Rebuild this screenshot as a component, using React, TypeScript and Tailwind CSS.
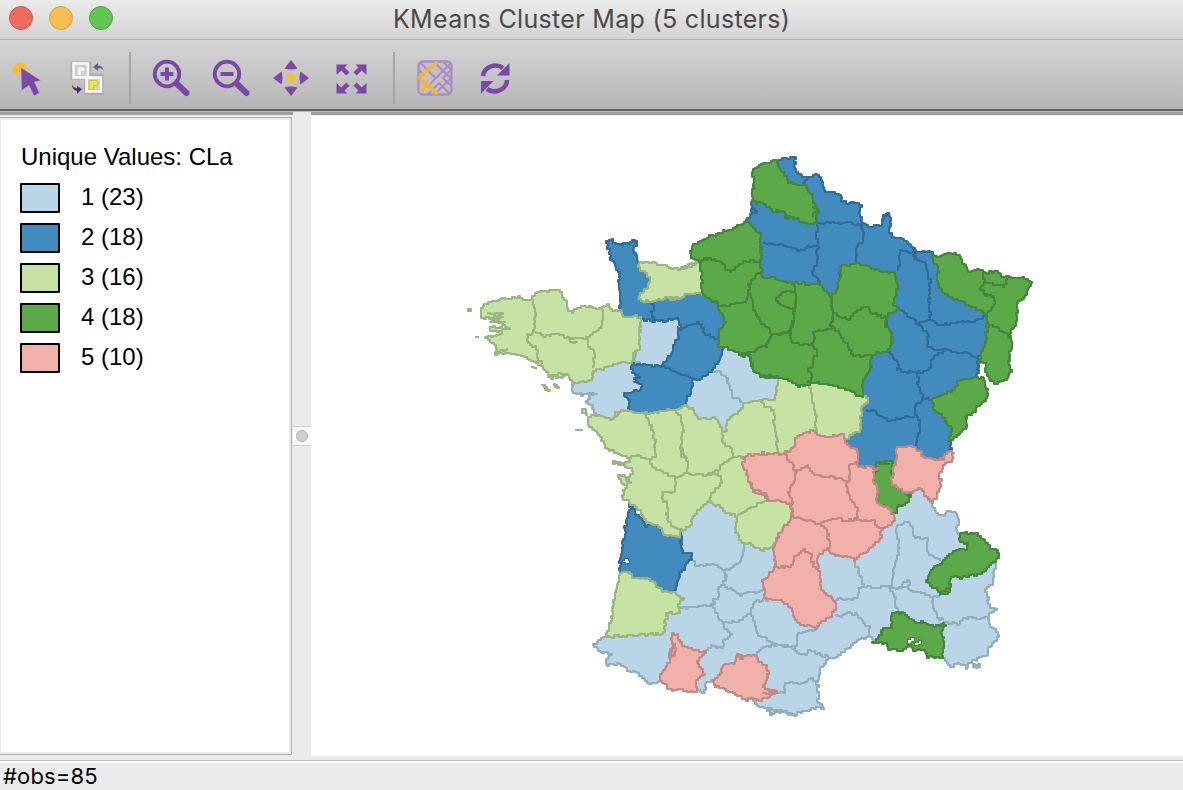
import React from "react";

type Pt = [number, number];

// Boundary tables are digitised sheet by sheet at three units per map pixel.
const SHEETS: Record<string, Pt> = {
  A: [460, 230],
  B: [670, 140],
  C: [840, 190],
  D: [560, 330],
  E: [740, 320],
  F: [580, 490],
  G: [740, 480],
};

function parse(src: string): Pt[] {
  let origin: Pt = [0, 0];
  const out: Pt[] = [];
  for (const tok of src.trim().split(/\s+/)) {
    if (SHEETS[tok]) {
      origin = SHEETS[tok];
    } else {
      const [x, y] = tok.split(",").map(Number);
      out.push([origin[0] + x / 3, origin[1] + y / 3]);
    }
  }
  return out;
}

function noise(x: number, y: number) {
  const s = Math.sin(x * 12.9898 + y * 78.233) * 43758.5453;
  return (s - Math.floor(s)) * 2 - 1;
}

// Turns a coarse boundary into a stepped, pixel-aligned one.
function trace(src: string, closed: boolean, wobble = 1.35): string {
  const pts = parse(src);
  if (closed) pts.push(pts[0]);
  const r = Math.round;
  let d = `M${r(pts[0][0])} ${r(pts[0][1])}`;
  for (let i = 1; i < pts.length; i++) {
    const [x0, y0] = pts[i - 1];
    const [x1, y1] = pts[i];
    const len = Math.hypot(x1 - x0, y1 - y0) || 1;
    const n = Math.max(1, r(len / 2.5));
    for (let k = 1; k <= n; k++) {
      const t = k / n;
      let x = x0 + (x1 - x0) * t;
      let y = y0 + (y1 - y0) * t;
      if (k < n) {
        const j = noise(r(x), r(y)) * wobble;
        x += (-(y1 - y0) / len) * j;
        y += ((x1 - x0) / len) * j;
      }
      d += `H${r(x)}V${r(y)}`;
    }
  }
  return closed ? d + "Z" : d;
}

interface Cluster {
  label: string;
  fill: string;
  stroke: string;
  areas: string[];
  lines: string[];
}

const CLUSTERS: Cluster[] = [
  {
    label: "1 (23)",
    fill: "#bad5e7",
    stroke: "#93adbc",
    areas: [
      "A 530,265 670,262 670,290 620,415 515,415 525,375",
      "A 400,418 350,458 335,464 338,490 356,488 362,497 385,489 410,491 388,500 390,507 378,518 398,530 403,550 430,568 450,580 520,555 520,510 520,490 560,470 540,395 490,390",
      "D 485,40 500,50 555,70 590,90 610,130 665,135 660,220 580,225 550,240 510,285 490,315 470,280 410,277 365,235 370,215 390,150 420,140 455,120 475,90",
      "F 75,440 55,455 38,465 60,485 80,485 95,495 78,515 80,528 110,520 150,545 178,550 185,565 208,582 238,572 300,590 345,598 360,605 375,608 378,575 400,572 450,595 500,615 527,635 530,648 560,655 570,672 600,660 645,675 G 80,685 90,705 110,695 130,693 162,708 185,692 235,682 252,685 245,672 233,665 233,600 240,570 265,535 300,525 345,485 385,468 400,480 450,480 600,525 620,548 630,560 650,550 672,555 680,568 685,548 740,525 745,500 770,480 773,455 755,440 745,410 755,395 772,388 750,380 740,345 740,320 755,315 760,275 768,250 740,220 690,180 665,165 650,150 655,110 640,95 620,95 615,108 600,105 585,85 575,66 550,25 510,35 480,80 455,110 430,140 380,180 300,190 150,200 F 590,165 545,165 515,145 485,125 488,65 440,45 400,25 385,20 330,80 285,130 290,200 280,300 250,400 240,425",
      "G 700,560 715,562 720,553 706,551",
    ],
    lines: [
      "D 455,127 480,127 497,145 507,165 517,205 530,205 543,220",
      "F 340,212 345,228 385,225 410,225 425,240 445,240 475,220 490,190 492,162",
      "F 425,240 440,260 430,285 415,290 418,320 400,335 400,348",
      "F 430,285 455,300 480,318 500,305 525,310 550,295",
      "F 303,355 330,350 370,345 400,345 405,370 425,395 470,395 510,370 522,335 565,328",
      "F 425,395 440,420 455,435 435,450 430,475 395,465 385,480 370,487",
      "F 510,370 525,400 530,430 570,455 590,465 620,470 650,465",
      "F 530,500 530,485 550,470 590,468",
      "G 115,495 165,505 170,480 175,460 190,455 215,452 235,440",
      "G 165,505 170,520 195,525 205,510 240,525 265,535",
      "G 285,405 300,410 325,395 350,405 370,430 390,445 388,470",
      "G 345,245 355,280 365,305 372,320 355,325 355,355 280,360",
      "G 372,320 400,325 430,318 450,325 462,350 465,370 475,395",
      "G 450,325 460,290 468,240 478,200 472,160 470,135",
      "G 470,135 500,125 520,150 525,175 560,175 563,220 600,243",
      "G 450,325 475,325 485,320 490,305 500,300 510,315 495,322 478,318",
      "G 500,325 520,335 550,340 575,355 580,385 590,415 610,420",
      "G 575,352 598,345",
      "G 610,425 650,435 670,415 700,415 740,412",
      "G 115,640 135,635 135,610 190,610 205,597 235,603",
    ],
  },
  {
    label: "2 (18)",
    fill: "#428bbe",
    stroke: "#2f6d99",
    areas: [
      "A 438,32 455,27 460,38 485,44 510,35 530,32 530,48 520,62 528,75 535,100 600,130 600,190 700,180 B 95,440 160,480 185,540 160,595 D 490,45 480,90 455,125 420,150 400,150 395,175 378,220 370,250 300,257 215,257 205,230 210,210 200,200 192,190 215,185 240,180 245,162 222,155 240,140 225,130 215,125 215,100 240,105 300,110 320,85 335,65 345,40 355,10 A 655,300 662,285 655,265 640,270 585,275 545,268 520,262 488,262 480,235 483,215 480,180 475,150 480,125 455,90 447,65 445,40",
      "B 318,65 335,55 375,50 378,95 395,112 410,115 435,103 452,112 458,135 465,155 490,155 508,165 512,185 560,190 575,200 570,230 575,250 600,262 635,255 638,230 655,220 C 125,100 130,75 145,70 150,85 148,130 155,140 200,155 220,175 228,185 270,185 280,197 315,240 325,280 350,310 450,350 455,400 445,470 415,505 412,555 E 690,190 640,230 615,260 640,330 635,360 635,390 605,430 570,430 500,410 480,400 475,435 400,453 340,450 340,400 310,375 310,340 355,330 350,270 350,225 375,110 450,70 440,0 B 640,560 600,400 510,395 510,460 487,490 450,445 350,438 265,420 255,290 225,250 245,215 247,180 300,175 420,230 410,190 390,160 320,130",
      "F 152,42 145,75 138,100 130,170 122,205 120,248 130,265 200,285 250,320 280,308 290,280 297,245 315,240 318,220 335,205 335,190 305,188 303,130 270,125 215,100 200,110 185,85 165,65 160,45",
    ],
    lines: [
      "A 570,222 582,235 575,255 580,275",
      "B 20,560 30,570 45,560 80,545 95,555 100,580 140,598",
      "D 310,108 350,130 390,145 400,150",
      "D 222,132 238,142 222,150",
      "B 280,310 320,315 350,320 380,333 410,318 440,318",
      "B 445,250 437,290 443,320 440,370 425,400 440,415 450,430",
      "B 430,250 445,250 500,250 540,247 575,260 580,300 560,325 558,365",
      "B 246,200 262,220 246,222",
      "B 395,130 410,115",
      "C 170,240 180,215 180,180 215,185 230,210 255,215 265,250 272,280 268,320 270,390",
      "C 215,170 225,190 228,205",
      "C 172,355 210,385 235,400 270,390 290,405 330,400 380,393 400,395 435,375",
      "C 225,402 245,415 265,435 262,470 290,480 320,480 350,490 380,490 415,505",
      "C 320,480 275,510 268,540 235,550 200,545 175,540 170,510 145,480",
      "E 535,165 535,200 550,235 525,265 525,285 540,305 540,340 530,365 530,390",
      "E 525,290 445,300 400,270 380,268",
      "E 545,235 575,235",
    ],
  },
  {
    label: "3 (16)",
    fill: "#c6e2a4",
    stroke: "#9bb480",
    areas: [
      "A 64,235 72,222 90,215 120,208 165,203 175,198 190,210 215,205 225,188 240,184 275,180 300,185 305,205 318,212 322,235 337,250 350,235 370,228 400,235 425,232 440,222 450,238 480,240 488,262 510,262 520,257 540,262 540,360 520,375 515,400 490,397 460,408 400,422 395,450 350,458 320,432 310,444 265,442 265,425 235,400 200,380 175,375 150,368 110,374 107,345 75,322 100,318 125,312 125,304 90,302 90,292 150,293 125,285 130,278 90,275 130,262 64,264",
      "A 538,95 560,95 600,105 655,120 690,110 715,95 B 30,388 60,372 85,362 110,400 105,465 80,458 45,465 30,478 0,475 A 660,205 620,200 580,215 535,208 540,190 560,175 570,150 560,130 540,120",
      "D 85,260 100,255 120,258 150,270 162,262 165,245 175,258 182,240 205,242 215,245 240,250 290,250 320,238 360,235 375,225 400,240 415,268 460,262 475,275 487,305 500,300 500,270 540,240 550,220 575,212 610,208 640,210 650,180 655,145 E 115,170 240,180 355,210 370,220 385,250 365,265 360,335 330,348 300,370 180,370 140,420 110,450 110,540 165,540 F 645,45 650,85 615,115 595,145 580,172 545,180 520,165 495,160 465,125 470,80 450,70 430,55 400,38 385,35 335,90 330,110 300,125 300,140 260,135 240,110 205,97 190,75 165,45 150,38 130,22 D 190,480 200,465 185,455 175,435 190,435 200,458 212,460 205,440 220,430 215,415 195,405 158,400 158,393 180,400 210,392 200,378 140,355 120,315 95,290 85,275",
      "F 120,248 150,245 155,265 205,268 245,305 285,308 312,330 295,350 300,370 262,370 250,432 150,435 125,440 80,438 95,385 100,330 110,290",
      "A 24,237 34,237 34,243 26,242",
      "A 247,465 255,480 270,480 262,472",
      "A 282,463 290,472 298,475 292,466",
      "D 65,238 78,242 80,255 70,248",
    ],
    lines: [
      "A 46,321 56,321",
      "A 214,412 230,413",
      "D 46,299 66,302",
      "A 82,250 128,252 118,262 90,268 135,280",
      "A 215,210 225,250 222,300 215,315 200,315 205,340 235,360 230,385 245,402",
      "A 222,305 250,320 290,312 335,328 360,325 385,320 400,305 425,295 430,255 425,235",
      "A 320,322 338,340 352,334",
      "A 385,320 385,350 400,360 405,385 398,415",
      "A 270,434 318,430",
      "A 115,365 140,355",
      "D 250,252 258,265 275,290 283,330 287,380 270,390",
      "D 200,385 230,375 265,388 275,410 310,428 345,445",
      "D 345,240 362,260 370,300 362,350 375,385 385,405 380,430 345,450 345,485 305,490 308,515 320,520 320,570 340,590 365,600",
      "D 362,350 364,380 385,385",
      "D 380,430 430,438 475,430 480,405 520,380 550,380",
      "D 470,420 430,438",
      "D 487,308 490,340 515,360 520,378",
      "D 475,430 485,460 460,490 440,520",
      "D 600,215 612,232 640,240 645,300 655,365",
      "F 470,75 500,58 520,50 545,35 585,28",
      "E 205,195 215,235 230,290 230,335",
    ],
  },
  {
    label: "4 (18)",
    fill: "#5ba948",
    stroke: "#44863a",
    areas: [
      "B 250,88 280,70 318,63 330,90 350,110 355,128 400,135 415,155 430,165 430,190 445,210 440,250 410,250 380,235 350,235 345,215 310,212 280,190 250,185",
      "B 232,240 195,265 130,285 75,312 60,340 62,355 88,365 98,430 98,465 140,490 150,520 168,550 148,575 145,598 D 475,50 520,62 550,80 570,78 575,115 600,138 655,140 E 60,168 115,175 165,190 175,200 230,185 300,205 365,230 370,185 390,145 395,105 440,92 458,65 455,35 435,15 C 135,395 145,370 175,355 160,340 175,290 165,245 130,245 95,235 60,218 20,225 0,235 B 510,385 512,410 500,450 487,472 450,430 390,432 350,425 315,412 275,412 272,280 250,258",
      "C 275,195 300,198 320,188 355,195 365,215 385,245 410,238 435,250 470,243 490,262 545,262 575,280 555,320 532,345 528,400 512,430 515,460 510,500 505,520 515,545 500,570 475,582 455,572 435,540 437,520 415,512 430,470 440,440 440,372 400,352 340,325 295,290 290,265 295,235 280,210",
      "E 575,235 630,215 660,180 700,170 730,175 735,200 745,210 740,235 695,285 675,290 680,320 640,360 625,365 635,325 610,290 585,270",
      "E 408,425 455,425 458,450 455,490 480,505 513,530 500,550 475,560 470,578 455,575 440,560 410,550 412,510 398,480 400,460 415,450",
      "G 660,158 710,160 735,185 750,208 775,212 778,235 725,282 670,290 665,298 650,288 630,305 630,335 600,345 590,325 558,300 580,265 610,240 640,212 680,210 685,190 660,180",
      "G 455,400 490,400 515,420 550,430 580,440 610,430 618,438 605,455 612,490 610,535 560,530 555,510 520,512 510,495 490,512 470,508 445,505 440,490 395,488 425,460 430,445 455,440",
    ],
    lines: [
      "B 88,362 115,355 165,372 165,390 180,397 215,370 240,360 268,370",
      "B 345,228 385,238",
      "B 425,200 440,215 428,230",
      "B 270,400 235,435 240,465 250,510 270,545 300,570 300,600",
      "B 240,465 220,490 150,500",
      "B 372,430 378,470 378,505 368,515 370,560 355,580 300,582",
      "B 378,455 340,458 320,475 325,490 345,500 378,505",
      "B 487,472 485,510 490,530 480,560",
      "B 490,520 535,540 560,510 595,500 600,520 655,535",
      "E 0,105 30,95 80,75 90,50 92,45",
      "E 28,95 32,140",
      "E 90,45 150,38 155,0",
      "E 150,38 155,70 220,72 220,35 275,22 280,-10",
      "E 275,22 300,45 325,80 340,108 390,108",
      "E 220,72 230,100 220,140 205,150 215,175 205,190",
      "C 430,250 435,275 420,300 435,318 460,318 462,350 445,370",
      "C 430,275 490,290 502,265",
      "C 432,312 456,314",
      "C 440,410 455,405 485,425 512,445",
      "E 412,430 450,432",
      "G 600,338 628,325",
    ],
  },
  {
    label: "5 (10)",
    fill: "#f2b0ab",
    stroke: "#c18884",
    areas: [
      "E 470,380 515,380 545,400 550,412 570,415 605,420 620,395 642,400 635,425 615,435 600,460 603,500 580,550 565,530 540,505 520,518 490,515 475,500 455,490 458,450 468,430",
      "E 10,410 50,402 110,400 130,402 160,380 165,355 190,340 220,332 240,348 285,348 310,342 320,375 350,395 355,415 345,430 355,440 415,445 398,460 400,485 412,510 410,550 440,562 455,575 465,600 G 465,122 430,150 420,180 400,200 345,242 320,228 290,228 268,205 240,222 230,250 240,290 243,330 272,350 288,382 270,415 235,430 232,445 210,435 185,435 170,420 150,380 125,360 75,355 75,335 65,300 100,270 108,258 100,205 115,160 150,120 155,68 130,65 80,62 E 75,525 40,510 35,490 25,480 20,450 10,435",
      "F 275,430 290,432 300,455 315,472 345,480 378,488 350,518 375,555 348,575 350,605 330,605 300,597 280,603 240,570 245,545 270,510 268,490 278,465",
      "F 400,570 425,545 428,525 465,520 470,492 485,500 525,498 535,515 560,530 565,565 550,590 560,600 592,608 570,620 545,632 525,628 490,628 485,618 445,602 410,590",
    ],
    lines: [
      "E 130,400 155,430 165,455 162,490 145,520 155,545 160,590",
      "E 165,455 205,435 215,460 240,468 300,475 320,485",
      "E 350,432 330,435 330,480 320,490 320,520 350,565 355,595 345,600",
      "G 155,110 190,120 240,130 265,120 290,113 305,122 400,120 410,140 430,148",
      "G 240,130 262,155 270,205",
      "G 108,260 150,262 170,225 190,208 215,230 220,262 235,270",
      "G 25,5 40,30 70,40 85,58",
      "F 280,455 272,500 284,498 284,460",
      "F 465,500 490,508 480,496",
      "F 552,596 588,606 550,612",
    ],
  },
];

// Lagoons and bays that cut through the coastal regions.
const WATER = [
  { d: "M623 561h2v-2h3v2h1v2h-3v-1h-3z", edge: "#2f6d99" },
  { d: "M908 640h3v-2h3v3h-3v2h-3zM915 643h4v-2h2v3h-3v1h-3z", edge: "#44863a" },
];

function ClusterMap() {
  return (
    <svg viewBox="311 116 872 640" className="block h-[640px] w-[872px]">
      {CLUSTERS.map((c) => (
        <g key={c.label} strokeWidth={2} strokeLinejoin="round">
          {c.areas.map((a, i) => (
            <path key={i} d={trace(a, true)} fill={c.fill} stroke={c.stroke} />
          ))}
          {c.lines.map((l, i) => (
            <path key={i} d={trace(l, false)} fill="none" stroke={c.stroke} />
          ))}
        </g>
      ))}
      {WATER.map((w) => (
        <path key={w.d} d={w.d} fill="#fff" stroke={w.edge} strokeWidth={2.4} paintOrder="stroke" />
      ))}
    </svg>
  );
}

const P = "#7a48a6";
const Y = "#f3bd42";

function Icon({ children }: { children: React.ReactNode }) {
  return (
    <button className="h-10 w-10 shrink-0">
      <svg viewBox="0 0 40 40" className="block h-10 w-10">
        {children}
      </svg>
    </button>
  );
}

function Separator() {
  return <div className="h-[52px] w-[2px] shrink-0 bg-[#a5a5a5]" />;
}

function Toolbar() {
  return (
    <div className="flex h-[69px] shrink-0 items-center bg-linear-to-b from-[#d5d5d5] to-[#b6b6b6] pt-[7px] pl-[7px]">
      <div className="flex gap-5">
        <Icon>
          <path d="M8.500 15.500A6 6 0 1 1 19.500 11.500" fill="none" stroke={Y} strokeWidth="4" />
          <path d="M8 10l4-4 5 1 2 4-5 1-1 5-4-1z" fill={Y} />
          <path d="M14 9.500L34 22.500L27.500 24L32.500 35L27 38L22 27.500L14.500 32.500Z" fill={P} stroke="#c5b8cf" strokeWidth=".5" />
        </Icon>
        <Icon>
          <path d="M3.500 3.500h21v12h12v21.500H17V21.500H3.500z" fill="#a4a4a4" opacity=".7" />
          <path d="M6.500 5.500h14.500v14h-14.500zM19.500 19.500h14.500v14h-14.500z" fill="#d0d0d0" stroke="#fafafa" strokeWidth="2.500" />
          <path d="M10 9h8v4.500h-3.500v4h-4.500z" fill="#f5f5f5" stroke="#bbb" strokeWidth=".6" />
          <path d="M22 22.500h8.500v5h-4v4h-4.500z" fill="#f0e928" stroke="#b5ad58" strokeWidth=".6" />
          <path d="M26 9l5-4v2.500q5 0 5.500 5-2.500-3-5.500-2.300V13z" fill="#76549a" />
          <path d="M15 31l-5-3v2q-4 0-5-4 0 6 5 7v3z" fill="#4e3060" />
        </Icon>
      </div>
      <div className="ml-[22px]">
        <Separator />
      </div>
      <div className="ml-5 flex gap-5">
        <Icon>
          <circle cx="16" cy="16" r="12.300" fill="none" stroke={P} strokeWidth="3.800" />
          <path d="M25.500 25.500l10 9.500" stroke={P} strokeWidth="6" strokeLinecap="round" />
          <path d="M9.500 16h13M16 9.500v13" stroke={P} strokeWidth="4" />
        </Icon>
        <Icon>
          <circle cx="16" cy="16" r="12.300" fill="none" stroke={P} strokeWidth="3.800" />
          <path d="M25.500 25.500l10 9.500" stroke={P} strokeWidth="6" strokeLinecap="round" />
          <path d="M9.500 16h13" stroke={P} strokeWidth="4" />
        </Icon>
        <Icon>
          <path d="M20 2l6.500 8.500q-6.500 2-13 0zM20 38l6.500-8.500q-6.500-2-13 0zM2 20l8.500-6.500q2 6.500 0 13zM38 20l-8.500-6.500q-2 6.500 0 13z" fill={P} />
          <circle cx="20" cy="20" r="5" fill={Y} />
        </Icon>
        <Icon>
          <path d="M5.500 6.500h11l-3 3 5 4.800-3.200 3.200-5-5-4.800 4.500zM35.500 6.500H24.500l3 3-5 4.800 3.200 3.200 5-5 4.800 4.500zM5.500 35.500h11l-3-3 5-4.800-3.200-3.200-5 5-4.800-4.500zM35.500 35.500H24.500l3-3-5-4.800 3.200-3.200 5 5 4.800-4.500z" fill={P} />
        </Icon>
      </div>
      <div className="ml-[22px]">
        <Separator />
      </div>
      <div className="ml-5 flex gap-5">
        <Icon>
          <rect x="3.500" y="3.500" width="33" height="33" rx="4.500" fill="#c4bfca" stroke="#a88fc0" strokeWidth="2.400" />
          <path d="M20 5l16 15.500M36 5L12 29M28 4l8 7.500M36 12L28 20l8 8M6 5l14 15M4 12l5 5M13 36l11-11 11 11M36 20L22 34M5 36l3-3" fill="none" stroke="#a88fc0" strokeWidth="2" />
          <path d="M22.500 4L4.500 19.500L22.500 36M14 25L5 34" fill="none" stroke="#f4b63a" strokeWidth="3.600" />
        </Icon>
        <Icon>
          <path d="M8 18A12.500 11.500 0 0 1 28 10M32 22A12.500 11.500 0 0 1 12 31" fill="none" stroke={P} strokeWidth="4.600" />
          <path d="M34.500 5v12.500H22zM6 35.500V23h12.500z" fill={P} />
        </Icon>
      </div>
    </div>
  );
}

function Light({ className }: { className: string }) {
  return <div className={`h-6 w-6 rounded-full border ${className}`} />;
}

export default function App() {
  return (
    <div className="flex h-[790px] w-[1183px] flex-col overflow-hidden bg-[#ebebeb] text-black">
      <header className="grid h-10 shrink-0 grid-cols-[393px_1fr] items-center border-b border-[#b1b1b1] bg-linear-to-b from-[#ebebeb] to-[#d4d4d4]">
        <div className="flex gap-4 pb-[3px] pl-[9px]">
          <Light className="border-[#d55248] bg-[#ed6b60]" />
          <Light className="border-[#d9a03c] bg-[#f6be50]" />
          <Light className="border-[#4ca73b] bg-[#62c655]" />
        </div>
        <h1 className="pb-[2px] font-[Inter,sans-serif] text-[25px] leading-8 tracking-[0.32px] whitespace-nowrap text-[#4a4a4a]">
          <span>KMeans Cluster Map (5 clusters)</span>
        </h1>
      </header>
      <Toolbar />
      <div className="h-[2px] shrink-0 bg-[#626262]" />
      <div className="h-px shrink-0 bg-[#b9b9b9]" />
      <main className="flex h-[648px] shrink-0">
        <div className="flex w-[293px] flex-col">
          <div className="h-[3px] shrink-0 bg-[#9d9d9d]" />
          <div className="h-[2px] shrink-0" />
          <aside className="h-[638px] w-[292px] border-y border-r border-[#aeaeae] pt-[2px] pr-[2px] pb-[2px] pl-px">
            <div className="h-full bg-white pt-[22px] pl-[19px] font-['Liberation_Sans',sans-serif] text-[24px]">
              <div className="h-[40px] pl-px leading-[30px] whitespace-nowrap">Unique Values: CLa</div>
              {CLUSTERS.map((c) => (
                <div key={c.label} className="flex h-10 items-start">
                  <div
                    className="mt-[1px] h-[30px] w-10 shrink-0 rounded-[1px] border-2 border-black"
                    style={{ backgroundColor: c.fill }}
                  />
                  <div className="ml-[21px] leading-[29px] whitespace-nowrap">{c.label}</div>
                </div>
              ))}
            </div>
          </aside>
        </div>
        <div className="flex w-[18px] flex-col pt-[314px]">
          <div className="flex h-5 items-center justify-center border-y border-[#d0d0d0] bg-[#fafafa]">
            <div className="h-3 w-3 rounded-full border border-[#b5b5b5] bg-[#cfcfcf]" />
          </div>
        </div>
        <section className="flex w-[872px] flex-col">
          <div className="h-[3px] shrink-0 bg-[#9d9d9d]" />
          <div className="h-px shrink-0 bg-[#ebebeb]" />
          <div className="h-[640px] bg-white">
            <ClusterMap />
          </div>
        </section>
      </main>
      <div className="h-px shrink-0 bg-[#bcbcbc]" />
      <div className="h-[2px] shrink-0 bg-white" />
      <footer className="flex-1 pl-[3px] font-[Inter,sans-serif] text-[22px] leading-[27px] tracking-[0.15px]">
        <span>#obs=85</span>
      </footer>
    </div>
  );
}
